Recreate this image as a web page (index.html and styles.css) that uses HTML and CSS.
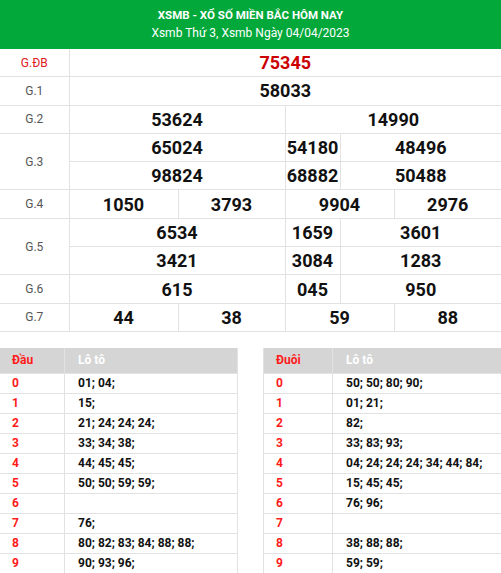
FILE: index.html
```html
<!DOCTYPE html>
<html lang="vi">
<head>
<meta charset="utf-8">
<title>XSMB</title>
<link rel="stylesheet" href="styles.css">
</head>
<body>
<div class="header">
  <div class="title">XSMB - XỔ SỐ MIỀN BẮC HÔM NAY</div>
  <div class="subtitle">Xsmb Thứ 3, Xsmb Ngày 04/04/2023</div>
</div>
<table class="results">
  <colgroup>
    <col class="c-label"><col class="c-a"><col class="c-b"><col class="c-c"><col class="c-d"><col class="c-e">
  </colgroup>
  <tr><td class="label special">G.ĐB</td><td colspan="5" class="num special-num">75345</td></tr>
  <tr><td class="label">G.1</td><td colspan="5" class="num">58033</td></tr>
  <tr><td class="label">G.2</td><td colspan="2" class="num">53624</td><td colspan="3" class="num">14990</td></tr>
  <tr><td class="label" rowspan="2">G.3</td><td colspan="2" class="num">65024</td><td class="num">54180</td><td colspan="2" class="num">48496</td></tr>
  <tr><td colspan="2" class="num">98824</td><td class="num">68882</td><td colspan="2" class="num">50488</td></tr>
  <tr><td class="label">G.4</td><td class="num">1050</td><td class="num">3793</td><td colspan="2" class="num">9904</td><td class="num">2976</td></tr>
  <tr><td class="label" rowspan="2">G.5</td><td colspan="2" class="num">6534</td><td class="num">1659</td><td colspan="2" class="num">3601</td></tr>
  <tr><td colspan="2" class="num">3421</td><td class="num">3084</td><td colspan="2" class="num">1283</td></tr>
  <tr><td class="label">G.6</td><td colspan="2" class="num">615</td><td class="num">045</td><td colspan="2" class="num">950</td></tr>
  <tr><td class="label">G.7</td><td class="num">44</td><td class="num">38</td><td colspan="2" class="num">59</td><td class="num">88</td></tr>
</table>
<div class="loto-wrap">
  <table class="loto loto-dau">
    <tr><th class="head-key">Đầu</th><th class="head-val">Lô tô</th></tr>
    <tr><td class="key">0</td><td class="val">01; 04;</td></tr>
    <tr><td class="key">1</td><td class="val">15;</td></tr>
    <tr><td class="key">2</td><td class="val">21; 24; 24; 24;</td></tr>
    <tr><td class="key">3</td><td class="val">33; 34; 38;</td></tr>
    <tr><td class="key">4</td><td class="val">44; 45; 45;</td></tr>
    <tr><td class="key">5</td><td class="val">50; 50; 59; 59;</td></tr>
    <tr><td class="key">6</td><td class="val"></td></tr>
    <tr><td class="key">7</td><td class="val">76;</td></tr>
    <tr><td class="key">8</td><td class="val">80; 82; 83; 84; 88; 88;</td></tr>
    <tr><td class="key">9</td><td class="val">90; 93; 96;</td></tr>
  </table>
  <table class="loto loto-duoi">
    <tr><th class="head-key">Đuôi</th><th class="head-val">Lô tô</th></tr>
    <tr><td class="key">0</td><td class="val">50; 50; 80; 90;</td></tr>
    <tr><td class="key">1</td><td class="val">01; 21;</td></tr>
    <tr><td class="key">2</td><td class="val">82;</td></tr>
    <tr><td class="key">3</td><td class="val">33; 83; 93;</td></tr>
    <tr><td class="key">4</td><td class="val">04; 24; 24; 24; 34; 44; 84;</td></tr>
    <tr><td class="key">5</td><td class="val">15; 45; 45;</td></tr>
    <tr><td class="key">6</td><td class="val">76; 96;</td></tr>
    <tr><td class="key">7</td><td class="val"></td></tr>
    <tr><td class="key">8</td><td class="val">38; 88; 88;</td></tr>
    <tr><td class="key">9</td><td class="val">59; 59;</td></tr>
  </table>
</div>
</body>
</html>
```
FILE: styles.css
```css
html, body {
  margin: 0;
  padding: 0;
  background: #fff;
  font-family: Roboto, "Liberation Sans", Arial, sans-serif;
  color: #111;
}
.header {
  background: #02a83a;
  color: #fff;
  text-align: center;
  height: 49px;
  box-sizing: border-box;
  padding-top: 6px;
}
.title {
  font-size: 11.5px;
  font-weight: bold;
  line-height: 18px;
}
.subtitle {
  font-size: 12px;
  line-height: 18px;
}
.results {
  width: 501px;
  border-collapse: collapse;
  table-layout: fixed;
}
.c-label { width: 69px; }
.c-a { width: 109px; }
.c-b { width: 107px; }
.c-c { width: 55px; }
.c-d { width: 54px; }
.c-e { width: 107px; }
.results td {
  border: 1px solid #e2e2e2;
  height: 27.3px;
  padding: 0;
  text-align: center;
}
.results tr:first-child td { border-top: none; }
.results td:first-child { border-left: none; }
.results td:last-child { border-right: none; }
.label {
  font-size: 12px;
  color: #555;
}
.label.special { color: #e02020; }
.num {
  font-size: 18px;
  font-weight: bold;
  color: #111;
}
.num.special-num { color: #cc0000; }
.loto-wrap {
  display: flex;
  justify-content: space-between;
  margin-top: 16px;
}
.loto {
  width: 238px;
  border-collapse: collapse;
  table-layout: fixed;
  font-size: 12px;
  font-weight: bold;
}
.loto-dau .head-key { width: 52px; }
.loto-duoi .head-key { width: 56px; }
.loto th {
  background: #d5d5d5;
  height: 25px;
  padding: 0 0 0 12px;
  text-align: left;
  border: 1px solid #e2e2e2;
  border-top: none;
}
.loto .head-key { color: #ff1a1a; }
.loto .head-val { color: #fff; padding-left: 13px; }
.loto td {
  height: 19px;
  padding: 0 0 0 12px;
  border: 1px solid #e2e2e2;
}
.loto .key { color: #ff1a1a; }
.loto .val { color: #111; padding-left: 13px; }
.loto-dau th:first-child, .loto-dau td:first-child { border-left: none; }
.loto-duoi th:last-child, .loto-duoi td:last-child { border-right: none; }
```
